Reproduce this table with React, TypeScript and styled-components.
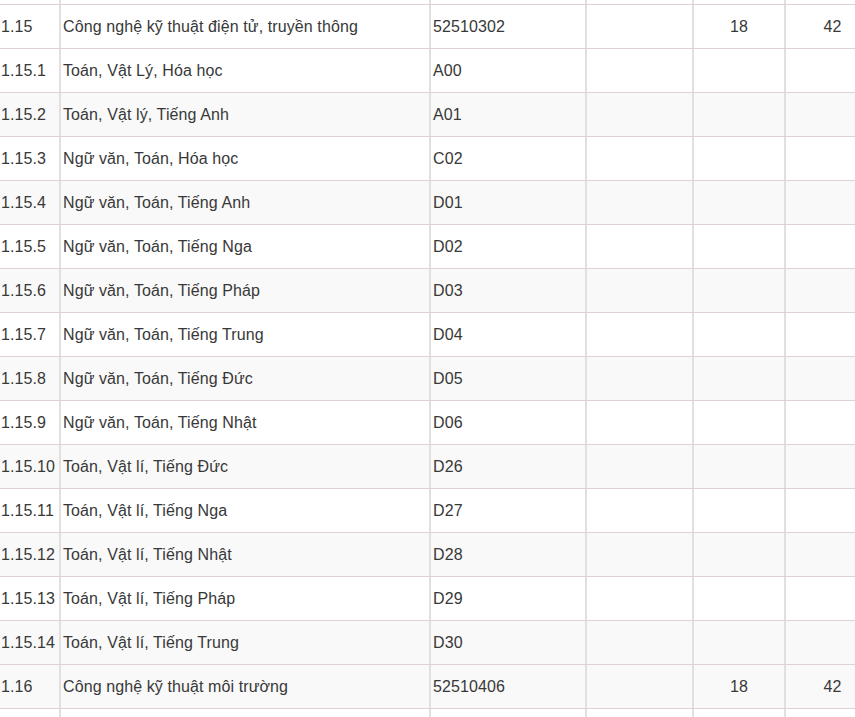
import styled, { createGlobalStyle } from "styled-components"

const GlobalStyle = createGlobalStyle`
  html, body {
    margin: 0;
    padding: 0;
    background: #fff;
    overflow: hidden;
  }
`

const Table = styled.div`
  width: 879px;
  font-family: "Liberation Sans", Arial, sans-serif;
  font-size: 16px;
  letter-spacing: 0.1px;
  color: #383838;
`

const Row = styled.div<{ $striped?: boolean; $h?: number }>`
  display: grid;
  grid-template-columns: 59px 370px 156px 107px 92px 95px;
  height: ${(p) => p.$h ?? 44}px;
  box-sizing: border-box;
  border-bottom: 1px solid #ddd3d6;
  background: ${(p) => (p.$striped ? "#f9f9f9" : "#fff")};
`

const Cell = styled.div<{ $center?: boolean }>`
  display: flex;
  align-items: center;
  justify-content: ${(p) => (p.$center ? "center" : "flex-start")};
  padding-left: ${(p) => (p.$center ? "0" : "2px")};
  border-left: 2px solid #e3dfe0;
  white-space: nowrap;
  overflow: hidden;

  &:first-child {
    border-left: none;
    padding-left: 1px;
  }
`

type Item = {
  no: string
  name: string
  code: string
  a?: string
  b?: string
  striped?: boolean
}

const rows: Item[] = [
  { no: "1.15", name: "Công nghệ kỹ thuật điện tử, truyền thông", code: "52510302", a: "18", b: "42" },
  { no: "1.15.1", name: "Toán, Vật Lý, Hóa học", code: "A00" },
  { no: "1.15.2", name: "Toán, Vật lý, Tiếng Anh", code: "A01", striped: true },
  { no: "1.15.3", name: "Ngữ văn, Toán, Hóa học", code: "C02" },
  { no: "1.15.4", name: "Ngữ văn, Toán, Tiếng Anh", code: "D01", striped: true },
  { no: "1.15.5", name: "Ngữ văn, Toán, Tiếng Nga", code: "D02" },
  { no: "1.15.6", name: "Ngữ văn, Toán, Tiếng Pháp", code: "D03", striped: true },
  { no: "1.15.7", name: "Ngữ văn, Toán, Tiếng Trung", code: "D04" },
  { no: "1.15.8", name: "Ngữ văn, Toán, Tiếng Đức", code: "D05", striped: true },
  { no: "1.15.9", name: "Ngữ văn, Toán, Tiếng Nhật", code: "D06" },
  { no: "1.15.10", name: "Toán, Vật lí, Tiếng Đức", code: "D26", striped: true },
  { no: "1.15.11", name: "Toán, Vật lí, Tiếng Nga", code: "D27" },
  { no: "1.15.12", name: "Toán, Vật lí, Tiếng Nhật", code: "D28", striped: true },
  { no: "1.15.13", name: "Toán, Vật lí, Tiếng Pháp", code: "D29" },
  { no: "1.15.14", name: "Toán, Vật lí, Tiếng Trung", code: "D30", striped: true },
  { no: "1.16", name: "Công nghệ kỹ thuật môi trường", code: "52510406", a: "18", b: "42", striped: true },
]

const EmptyCells = () => (
  <>
    <Cell />
    <Cell />
    <Cell />
    <Cell />
    <Cell />
    <Cell />
  </>
)

const App = () => {
  return (
    <>
      <GlobalStyle />
      <Table>
        <Row $h={5}>
          <EmptyCells />
        </Row>
        {rows.map((r) => (
          <Row key={r.no} $striped={r.striped}>
            <Cell>{r.no}</Cell>
            <Cell>{r.name}</Cell>
            <Cell>{r.code}</Cell>
            <Cell />
            <Cell $center>{r.a}</Cell>
            <Cell $center>{r.b}</Cell>
          </Row>
        ))}
        <Row>
          <EmptyCells />
        </Row>
      </Table>
    </>
  )
}

export default App
